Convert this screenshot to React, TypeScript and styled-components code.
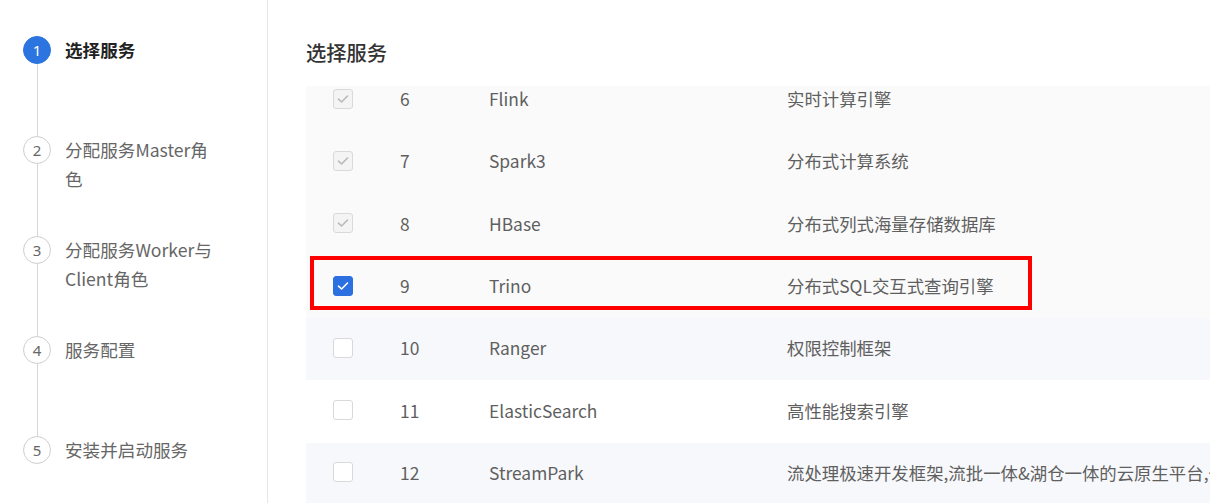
import React from "react";
import styled, { createGlobalStyle } from "styled-components";

type BoxState = "disabled" | "checked" | "empty";
type RowTone = "muted" | "stripe" | "plain";

type ServiceRow = {
  id: number;
  name: string;
  desc: string;
  box: BoxState;
  tone: RowTone;
  marked?: boolean;
};

const steps = [
  { no: 1, label: "选择服务" },
  { no: 2, label: "分配服务Master角色" },
  { no: 3, label: "分配服务Worker与Client角色" },
  { no: 4, label: "服务配置" },
  { no: 5, label: "安装并启动服务" },
];

const rows: ServiceRow[] = [
  { id: 6, name: "Flink", desc: "实时计算引擎", box: "disabled", tone: "muted" },
  { id: 7, name: "Spark3", desc: "分布式计算系统", box: "disabled", tone: "muted" },
  { id: 8, name: "HBase", desc: "分布式列式海量存储数据库", box: "disabled", tone: "muted" },
  { id: 9, name: "Trino", desc: "分布式SQL交互式查询引擎", box: "checked", tone: "muted", marked: true },
  { id: 10, name: "Ranger", desc: "权限控制框架", box: "empty", tone: "stripe" },
  { id: 11, name: "ElasticSearch", desc: "高性能搜索引擎", box: "empty", tone: "plain" },
  {
    id: 12,
    name: "StreamPark",
    desc: "流处理极速开发框架,流批一体&湖仓一体的云原生平台,一站式流处理计算平台",
    box: "empty",
    tone: "stripe",
  },
];

const GlobalStyle = createGlobalStyle`
  html, body {
    margin: 0;
    padding: 0;
    background: #fff;
    overflow: hidden;
  }
  body {
    font-family: "Noto Sans CJK SC", "Noto Sans", sans-serif;
  }
  * {
    box-sizing: border-box;
  }
`;

const CheckMark = ({ color }: { color: string }) => (
  <svg width="12" height="10" viewBox="0 0 12 10">
    <polyline points="1.5,5.2 4.6,8 10.5,2" fill="none" stroke={color} strokeWidth="1.6" strokeLinecap="round" strokeLinejoin="round" />
  </svg>
);

export default function App() {
  return (
    <>
      <GlobalStyle />
      <Page>
        <Sidebar>
          {steps.map((s, i) => (
            <Step key={s.no}>
              <Indicator>
                <Circle $active={s.no === 1}>{s.no}</Circle>
                {i < steps.length - 1 && <Connector />}
              </Indicator>
              <StepLabel $active={s.no === 1}>{s.label}</StepLabel>
            </Step>
          ))}
        </Sidebar>
        <Main>
          <Title>选择服务</Title>
          <TableViewport>
            <TableBody>
              {rows.map((r) => (
                <Row key={r.id} $tone={r.tone}>
                  <BoxCell>
                    <Box $state={r.box}>
                      {r.box === "disabled" && <CheckMark color="#b9b9b9" />}
                      {r.box === "checked" && <CheckMark color="#fff" />}
                    </Box>
                  </BoxCell>
                  <Cell>{r.id}</Cell>
                  <Cell>{r.name}</Cell>
                  <Cell>{r.desc}</Cell>
                  {r.marked && <Highlight />}
                </Row>
              ))}
            </TableBody>
          </TableViewport>
        </Main>
      </Page>
    </>
  );
}

const Page = styled.div`
  display: flex;
  width: 1210px;
  height: 503px;
  overflow: hidden;
`;

const Sidebar = styled.div`
  width: 268px;
  flex-shrink: 0;
  border-right: 1px solid #e6e6e6;
  padding: 36px 0 0 23px;
  display: flex;
  flex-direction: column;
`;

const Step = styled.div`
  display: flex;
  gap: 14px;
  height: 100px;
  flex-shrink: 0;
`;

const Indicator = styled.div`
  width: 28px;
  display: flex;
  flex-direction: column;
  align-items: center;
`;

const Circle = styled.div<{ $active: boolean }>`
  width: 28px;
  height: 28px;
  border-radius: 50%;
  flex-shrink: 0;
  display: flex;
  align-items: center;
  justify-content: center;
  font-size: 15px;
  font-family: "Noto Sans", sans-serif;
  background: ${(p) => (p.$active ? "#2c74e0" : "#fff")};
  color: ${(p) => (p.$active ? "#fff" : "#666")};
  border: 1px solid ${(p) => (p.$active ? "#2c74e0" : "#cfcfcf")};
`;

const Connector = styled.div`
  width: 1px;
  flex: 1;
  background: #d6d6d6;
`;

const StepLabel = styled.div<{ $active: boolean }>`
  width: 155px;
  font-size: 17.6px;
  line-height: 29px;
  margin-top: -1px;
  color: ${(p) => (p.$active ? "#222" : "#666")};
  font-weight: ${(p) => (p.$active ? 700 : 400)};
`;

const Main = styled.div`
  flex: 1;
  min-width: 0;
  padding-left: 38px;
  display: flex;
  flex-direction: column;
  overflow: hidden;
`;

const Title = styled.div`
  margin-top: 38px;
  height: 28px;
  line-height: 28px;
  margin-bottom: 20px;
  font-size: 20.3px;
  font-weight: 500;
  color: #333;
`;

const TableViewport = styled.div`
  flex: 1;
  overflow: hidden;
`;

const TableBody = styled.div`
  margin-top: -17px;
  width: 1100px;
  display: flex;
  flex-direction: column;
`;

const toneBg: Record<RowTone, string> = {
  muted: "#fafafa",
  stripe: "#f7f8fb",
  plain: "#ffffff",
};

const Row = styled.div<{ $tone: RowTone }>`
  position: relative;
  height: 62.3px;
  flex-shrink: 0;
  display: grid;
  grid-template-columns: 94px 89px 298px 1fr;
  align-items: center;
  padding-bottom: 3px;
  background: ${(p) => toneBg[p.$tone]};
`;

const BoxCell = styled.div`
  padding-left: 27px;
  display: flex;
  align-items: center;
`;

const Box = styled.span<{ $state: BoxState }>`
  width: 20px;
  height: 20px;
  border-radius: 3px;
  display: flex;
  align-items: center;
  justify-content: center;
  background: ${(p) => (p.$state === "checked" ? "#2b6fe0" : p.$state === "disabled" ? "#f4f4f4" : "#fff")};
  border: 1px solid ${(p) => (p.$state === "checked" ? "#2b6fe0" : "#d9d9d9")};
`;

const Cell = styled.div`
  font-size: 17.4px;
  color: #5f5f5f;
  white-space: nowrap;
`;

const Highlight = styled.div`
  position: absolute;
  left: 4px;
  top: 0;
  width: 722px;
  height: 54px;
  border: 4px solid #ff0000;
  pointer-events: none;
`;
